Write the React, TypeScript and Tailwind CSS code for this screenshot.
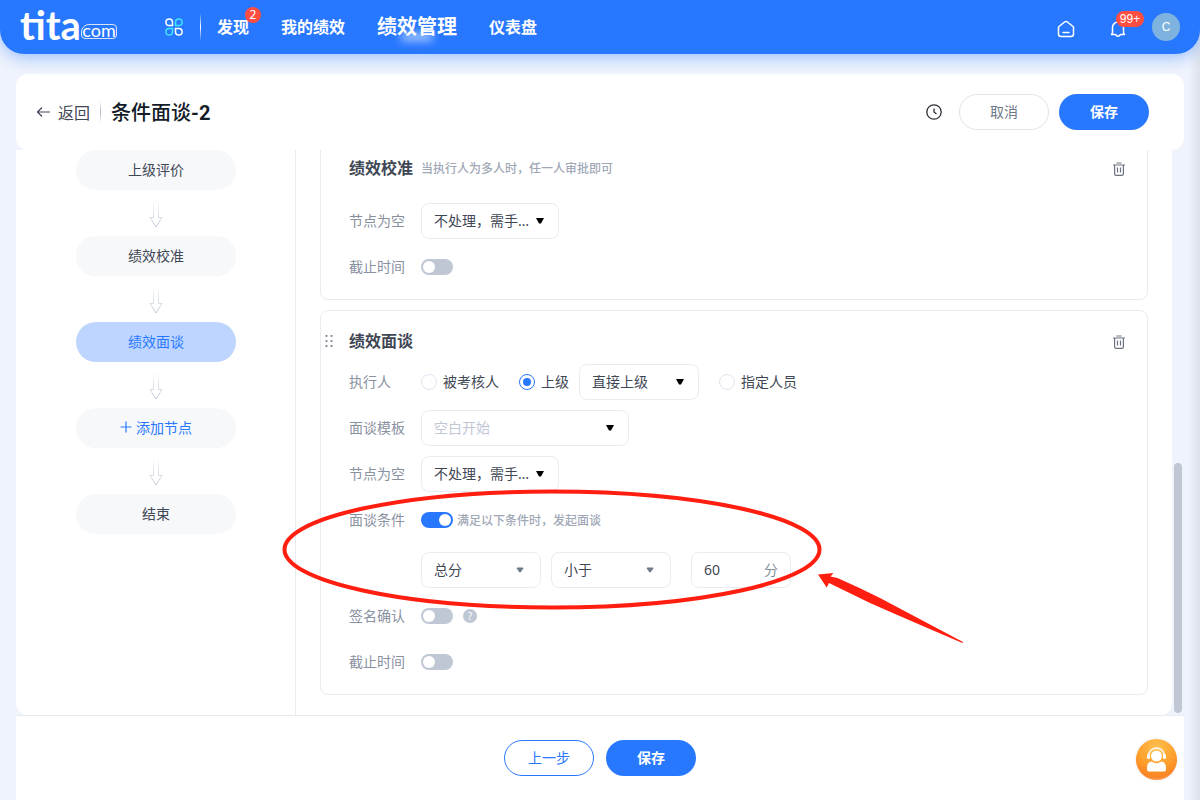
import React from 'react';

const Trash: React.FC = () => (
  <svg width="12" height="14" viewBox="0 0 12 14" fill="none" stroke="#6b7280" strokeWidth="1.2">
    <path d="M0 3h12M3.5 1h5M1.6 3v8.4q0 1.9 1.9 1.9h5q1.9 0 1.9-1.9V3M4.5 5.5v5M7.5 5.5v5" />
  </svg>
);

const Grip: React.FC = () => (
  <svg width="8" height="12" viewBox="0 0 8 12" fill="#7b8494">
    {[1, 6, 11].map((y) => (
      <React.Fragment key={y}>
        <circle cx="1.5" cy={y} r="1.1" />
        <circle cx="6.5" cy={y} r="1.1" />
      </React.Fragment>
    ))}
  </svg>
);

const StepArrow: React.FC<{ id: string }> = ({ id }) => (
  <svg className="ml-[73px] mt-2.5 mb-2" width="14" height="28" viewBox="0 0 14 28" fill="none">
    <defs>
      <linearGradient id={id} x1="0" y1="0" x2="0" y2="28" gradientUnits="userSpaceOnUse">
        <stop stopColor="#bfc7d5" stopOpacity="0" />
        <stop offset="1" stopColor="#bfc7d5" />
      </linearGradient>
    </defs>
    <path d="M4.5 0v17.5h-3.5l6 9.5 6-9.5H9.5V0" stroke={`url(#${id})`} strokeWidth="1" />
  </svg>
);

const Select: React.FC<{ label: string; value: string; width: string; muted?: boolean; small?: boolean }> = ({ label, value, width, muted, small }) => (
  <div className={`relative ${width}`}>
    <select
      aria-label={label}
      className={`w-full h-9 pl-3 pr-6 appearance-none rounded-lg border border-[#e9ebf0] bg-white text-sm ${muted ? 'text-[#bfc7d5]' : 'text-[#3f4755]'}`}
    >
      <option>{value}</option>
    </select>
    {small ? (
      <svg className="absolute right-[17px] top-[15px] pointer-events-none" width="8" height="6" viewBox="0 0 8 6" fill="#6f7886">
        <path d="M1.5.5h5q1.2 0 .8 1L4.8 5q-.8.9-1.6 0L.8 1.500q-.5-1 .7-1z" />
      </svg>
    ) : (
      <svg className="absolute right-[15px] top-[14px] pointer-events-none" width="8" height="7" viewBox="0 0 8 7" fill="#000">
        <path d="M0 1h8L5 6.500H3z" />
      </svg>
    )}
  </div>
);

const Switch: React.FC<{ id: string; on?: boolean }> = ({ id, on }) => (
  <input
    id={id}
    type="checkbox"
    role="switch"
    defaultChecked={on}
    className="appearance-none w-8 h-4 rounded-full bg-[#bfc7d5] checked:bg-[#2878ff] p-0.5 flex before:block before:w-3 before:h-3 before:rounded-full before:bg-white checked:before:ml-4"
  />
);

const Radio: React.FC<{ label: string; on?: boolean }> = ({ label, on }) => (
  <label className="flex items-center gap-1.5 text-sm text-[#3f4755]">
    <input
      type="radio"
      name="executor"
      defaultChecked={on}
      className="appearance-none w-4 h-4 rounded-full border border-[#dfe4ee] checked:border-[#2878ff] grid place-items-center before:w-2 before:h-2 before:rounded-full checked:before:bg-[#2878ff]"
    />
    {label}
  </label>
);

const Row: React.FC<{ label?: string; htmlFor?: string; children: React.ReactNode }> = ({ label, htmlFor, children }) => (
  <div className="flex items-center h-9">
    <label htmlFor={htmlFor} className="w-[72px] shrink-0 text-sm text-[#89919f]">{label}</label>
    {children}
  </div>
);

const CardTitle: React.FC<{ title: string; note?: string }> = ({ title, note }) => (
  <div className="flex items-center h-7 -mr-1.5">
    <h2 className="text-base font-bold text-[#3f4755]">{title}</h2>
    <span className="ml-2 mt-0.5 text-xs font-medium text-[#a0a8b6]">{note}</span>
    <button aria-label="删除" className="ml-auto mt-0.5"><Trash /></button>
  </div>
);

const TopBar: React.FC = () => (
  <header className="relative z-20 shrink-0 flex items-center h-[54px] px-5 rounded-b-3xl bg-[#2878ff] text-white shadow-[0_4px_16px_rgba(40,120,255,0.4)]">
    <a href="#" className="flex items-end w-[145px] h-7 mb-1">
      <span className="w-[61px] font-['Lato'] font-bold text-[40px] leading-7">tita</span>
      <span className="flex items-center justify-center w-9 h-[15px] rounded-sm rounded-tl-lg border border-white/80 font-['Lato'] text-[18px] leading-3 pb-1">com</span>
    </a>
    <button aria-label="应用">
      <svg width="18" height="18" viewBox="0 0 18 18" fill="none" strokeWidth="1.5">
        <path d="M7.500 7.500H4.200A3.300 3.300 0 1 1 7.500 4.200z" stroke="#fff" />
        <path d="M10.500 7.500h3.300a3.300 3.300 0 1 0-3.300-3.300z" stroke="#3fe3ff" />
        <path d="M7.500 10.500H4.200a3.300 3.300 0 1 0 3.300 3.300z" stroke="#3fe3ff" />
        <path d="M10.500 10.500h3.300a3.300 3.300 0 1 1-3.300 3.300z" stroke="#fff" />
      </svg>
    </button>
    <span className="w-px h-7 mr-4 ml-[17px] bg-linear-to-b from-transparent via-white to-transparent" />
    <nav className="flex items-center gap-8 font-bold">
      <a href="#" className="relative">
        发现
        <span className="absolute -top-2 -right-3 w-4 h-4 rounded-full bg-[#ff4d42] text-xs leading-4 font-normal text-center">2</span>
      </a>
      <a href="#">我的绩效</a>
      <a href="#" className="relative text-xl">
        绩效管理
        <span className="absolute left-6 bottom-0 w-8 h-2 rounded-full bg-white/60 blur-xs" />
      </a>
      <a href="#">仪表盘</a>
    </nav>
    <div className="flex items-center ml-auto">
      <button aria-label="首页" className="mr-[34px] mt-1">
        <svg width="18" height="18" viewBox="0 0 18 18" fill="none" stroke="#fff" strokeWidth="1.5" strokeLinecap="round" strokeLinejoin="round">
          <path d="M1.500 7 7.500 2q1.500-1 3 0l6 5v7q0 2.500-2.500 2.500H4Q1.500 16.500 1.500 14zM6 12.500h6" />
        </svg>
      </button>
      <button aria-label="通知" className="relative mr-[25px] mt-1">
        <svg width="18" height="18" viewBox="0 0 18 18" fill="none" stroke="#fff" strokeWidth="1.5" strokeLinecap="round" strokeLinejoin="round">
          <path d="M3.500 13V7.500a5.500 5.500 0 0 1 11 0V13l1 1.500h-4Q9 18 6.500 14.500h-4z" />
        </svg>
        <span className="absolute left-[7px] -top-[9px] w-7 h-4 rounded-full bg-[#ff4d42] font-['Liberation_Sans'] text-xs leading-4 text-center">99+</span>
      </button>
      <span className="w-7 h-7 rounded-full bg-[#7fb3df] font-['Liberation_Sans'] text-xs leading-7 text-center">C</span>
    </div>
  </header>
);

const pill = 'flex items-center justify-center w-40 h-10 rounded-full text-sm';

const Steps: React.FC = () => (
  <aside className="w-[280px] shrink-0 pl-[60px] border-r border-[#e9ebf0]">
    <button className={`${pill} bg-[#f7f8fa] text-[#3f4755]`}>上级评价</button>
    <StepArrow id="a1" />
    <button className={`${pill} bg-[#f7f8fa] text-[#3f4755]`}>绩效校准</button>
    <StepArrow id="a2" />
    <button className={`${pill} bg-[#bed6ff] text-[#2878ff]`}>绩效面谈</button>
    <StepArrow id="a3" />
    <button className={`${pill} gap-1 bg-[#f7f8fa] text-[#2878ff]`}>
      <svg className="mb-0.5" width="12" height="12" viewBox="0 0 12 12" stroke="currentColor" strokeWidth="1.2"><path d="M6 .5v11M.5 6h11" /></svg>
      添加节点
    </button>
    <StepArrow id="a4" />
    <button className={`${pill} bg-[#f7f8fa] text-[#3f4755]`}>结束</button>
  </aside>
);

// Red ellipse and arrow that point out the interview condition
const Annotation: React.FC = () => (
  <svg className="absolute z-30 left-[280px] top-[488px] pointer-events-none" width="690" height="160" viewBox="280 488 690 160" fill="none">
    <ellipse cx="552" cy="549.5" rx="267.5" ry="58" stroke="#ff1e10" strokeWidth="4" />
    <path d="M818 574.500 833.500 573l-3 3.500 7 1.500Q858 587 880 598L963 642l-.5 1Q920 625 870 603L829 583l-2.300 4.500z" fill="#ff1e10" />
  </svg>
);

const App: React.FC = () => {
  return (
    <div className="relative flex flex-col h-screen overflow-hidden bg-[#eff3fc] font-['Noto_Sans','Noto_Sans_CJK_SC',sans-serif]">
      <TopBar />
      <div className="absolute right-0 inset-y-0 w-3 bg-linear-to-r from-transparent to-[#dde1ea]" />

      <main className="relative flex-1 min-h-0 flex flex-col px-4 pt-5">
        <div className="relative z-10 shrink-0 flex items-center h-[76px] pl-5 pr-[35px] rounded-xl bg-white font-['Noto_Sans_CJK_SC',sans-serif]">
          <a href="#" className="flex items-center gap-2 text-[#3f4755]">
            <svg width="14" height="12" viewBox="0 0 14 12" fill="none" stroke="currentColor" strokeWidth="1.2"><path d="M14 6H1.500M6 1.500 1.500 6 6 10.500" /></svg>
            返回
          </a>
          <span className="w-px h-6 mx-2.5 bg-linear-to-b from-transparent via-[#aeb6c4] to-transparent" />
          <h1 className="text-xl font-medium text-[#141c28]">条件面谈<span className="font-['Roboto'] font-bold">-2</span></h1>
          <button aria-label="历史" className="ml-auto mr-[17px]">
            <svg width="16" height="16" viewBox="0 0 16 16" fill="none" stroke="#2b2f36" strokeWidth="1.3"><circle cx="8" cy="8" r="7.2" /><path d="M8 4.500V8l2.500 2" /></svg>
          </button>
          <button className="w-[90px] h-9 pb-0.5 rounded-full border border-[#e0e3eb] text-sm text-[#6f7886]">取消</button>
          <button className="w-[90px] h-9 pb-0.5 ml-2.5 rounded-full bg-[#2878ff] text-sm font-bold text-white">保存</button>
        </div>

        <div className="flex-1 min-h-0 flex">
          <div className="flex-1 min-w-0 flex overflow-hidden rounded-b-xl bg-white">
            <Steps />
            <div className="flex-1 min-w-0 flex flex-col justify-end gap-2.5 px-6 pb-5 overflow-hidden">
              <section className="shrink-0 px-7 pt-4 pb-[14px] rounded-lg border border-[#e9ebf0]">
                <CardTitle title="绩效校准" note="当执行人为多人时，任一人审批即可" />
                <div className="flex flex-col gap-2.5 mt-[21px]">
                  <Row label="节点为空"><Select label="节点为空" value="不处理，需手…" width="w-[138px]" /></Row>
                  <Row label="截止时间" htmlFor="deadline-1"><Switch id="deadline-1" /></Row>
                </div>
              </section>

              <section className="relative shrink-0 px-7 pt-4 pb-[14px] rounded-lg border border-[#e9ebf0]">
                <span className="absolute left-1 top-6"><Grip /></span>
                <CardTitle title="绩效面谈" />
                <div className="flex flex-col gap-2.5 mt-[9px]">
                  <Row label="执行人">
                    <Radio label="被考核人" />
                    <span className="w-5" />
                    <Radio label="上级" on />
                    <span className="w-2.5" />
                    <Select label="上级" value="直接上级" width="w-[120px]" />
                    <span className="w-5" />
                    <Radio label="指定人员" />
                  </Row>
                  <Row label="面谈模板"><Select label="面谈模板" value="空白开始" width="w-52" muted /></Row>
                  <Row label="节点为空"><Select label="节点为空" value="不处理，需手…" width="w-[138px]" /></Row>
                  <Row label="面谈条件" htmlFor="condition">
                    <Switch id="condition" on />
                    <span className="ml-1 mt-0.5 text-xs font-medium text-[#a0a8b6]">满足以下条件时，发起面谈</span>
                  </Row>
                  <div className="mt-1">
                    <Row>
                      <Select label="分数类型" value="总分" width="w-[120px]" small />
                      <span className="w-2.5" />
                      <Select label="比较" value="小于" width="w-[120px]" small />
                      <label className="flex items-center w-[100px] h-9 ml-5 px-3 rounded-lg border border-[#e9ebf0] text-sm text-[#89919f]">
                        <input defaultValue="60" className="min-w-0 flex-1 text-[#3f4755]" />
                        分
                      </label>
                    </Row>
                  </div>
                  <Row label="签名确认" htmlFor="sign">
                    <Switch id="sign" />
                    <span className="ml-2.5 w-[14px] h-[14px] rounded-full bg-[#bfc7d5] text-white text-[10px] leading-[14px] text-center">?</span>
                  </Row>
                  <Row label="截止时间" htmlFor="deadline-2"><Switch id="deadline-2" /></Row>
                </div>
              </section>
            </div>
          </div>
          <div className="w-3 shrink-0 flex flex-col justify-end items-center pb-0.5">
            <div className="w-2 h-[250px] rounded-full bg-[#bfc7d5]" />
          </div>
        </div>

        <footer className="relative shrink-0 flex items-center justify-center gap-3 h-[85px] border-t border-[#e9ebf0] bg-white">
          <button className="w-[90px] h-9 rounded-full border border-[#2878ff] text-sm text-[#2878ff]">上一步</button>
          <button className="w-[90px] h-9 rounded-full bg-[#2878ff] text-sm font-bold text-white">保存</button>
          <button aria-label="客服" className="absolute right-[7px] top-[23px] shadow-[0_0_3px_rgba(60,80,140,0.15)] rounded-full">
            <svg width="41" height="41" viewBox="0 0 41 41">
              <defs>
                <radialGradient id="svc" cx="0.5" cy="0.2" r="0.85">
                  <stop stopColor="#ffc04e" />
                  <stop offset="0.55" stopColor="#fd9f2c" />
                  <stop offset="0.85" stopColor="#fb8423" />
                  <stop offset="1" stopColor="#fba66a" />
                </radialGradient>
              </defs>
              <circle cx="20.5" cy="20.5" r="20.5" fill="url(#svc)" />
              <circle cx="20.5" cy="17" r="5.5" fill="#fff" />
              <path d="M12.500 17.500a8 8.500 0 0 1 16 0" fill="none" stroke="#fff3dc" strokeWidth="1.8" />
              <rect x="11" y="15" width="3" height="5" rx="1.5" fill="#fff" />
              <rect x="27" y="15" width="3" height="5" rx="1.5" fill="#fff" />
              <path d="M11 29q0-6 4.500-6.500 5 3.500 10 0 4.500.5 4.500 6.500v1.500q0 2-2 2H13q-2 0-2-2z" fill="#fff" />
            </svg>
          </button>
        </footer>
      </main>
      <Annotation />
    </div>
  );
};

export default App;
